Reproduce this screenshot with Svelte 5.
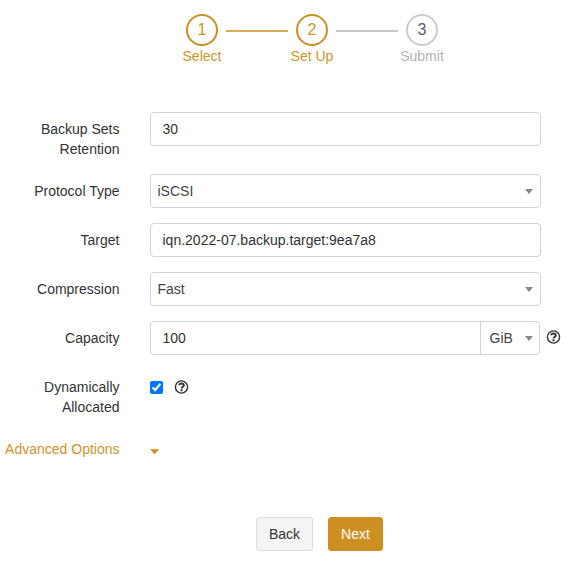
<script>
  const steps = [
    { n: 1, label: 'Select', active: true },
    { n: 2, label: 'Set Up', active: true },
    { n: 3, label: 'Submit', active: false },
  ];
  let retention = $state('30');
  let target = $state('iqn.2022-07.backup.target:9ea7a8');
  let capacity = $state('100');
  let dynamic = $state(true);
</script>

{#snippet help()}
  <svg class="help" width="14" height="14" viewBox="0.5 0 14 14" fill="none" stroke="#333">
    <circle cx="7" cy="7" r="6.1" stroke-width="1.4" />
    <path d="M4.6 5.3C5 4 5.8 3.5 6.9 3.5C8.3 3.5 9.3 4.3 9.3 5.4C9.3 6.8 7.1 6.8 7 8.5" stroke-width="1.9" />
    <path d="M6 10.3H8.1" stroke-width="1.9" />
  </svg>
{/snippet}

<div class="page">
  <div class="steps">
    {#each steps as step, i}
      {#if i > 0}
        <div class="line" class:done={steps[i].active}></div>
      {/if}
      <div class="step" class:active={step.active}>
        <div class="circle">{step.n}</div>
        <div class="caption">{step.label}</div>
      </div>
    {/each}
  </div>

  <div class="form">
    <div class="row">
      <label for="retention">Backup Sets Retention</label>
      <input id="retention" class="control" type="text" bind:value={retention} />
    </div>
    <div class="row">
      <span class="label">Protocol Type</span>
      <div class="control select"><span>iSCSI</span><i class="caret"></i></div>
    </div>
    <div class="row">
      <label for="target">Target</label>
      <input id="target" class="control" type="text" bind:value={target} />
    </div>
    <div class="row">
      <span class="label">Compression</span>
      <div class="control select"><span>Fast</span><i class="caret"></i></div>
    </div>
    <div class="row">
      <label for="capacity">Capacity</label>
      <div class="group">
        <input id="capacity" class="control" type="text" bind:value={capacity} />
        <div class="control select unit"><span>GiB</span><i class="caret"></i></div>
      </div>
      <div class="hint">{@render help()}</div>
    </div>
    <div class="row">
      <label for="dynamic">Dynamically Allocated</label>
      <div class="check">
        <input id="dynamic" type="checkbox" bind:checked={dynamic} />
        {@render help()}
      </div>
    </div>
    <div class="row">
      <span class="label advanced">Advanced Options</span>
      <svg class="expand" width="10" height="6" viewBox="0 0 10 6"><path d="M0 .2H9.2L4.6 5.2Z" fill="#ce8f22" /></svg>
    </div>
  </div>

  <div class="buttons">
    <button class="back">Back</button>
    <button class="next">Next</button>
  </div>
</div>

<style>
  :global(body) {
    background: #fff;
  }
  .page,
  .page * {
    box-sizing: border-box;
  }
  .page {
    width: 587px;
    height: 567px;
    overflow: hidden;
    padding-top: 14px;
    font: 14px/20px 'Liberation Sans', Arial, sans-serif;
    color: #333;
  }
  .steps {
    display: flex;
    height: 98px;
    padding-left: 178px;
  }
  .step {
    width: 48px;
    display: flex;
    flex-direction: column;
    align-items: center;
    color: #b3b3b8;
    white-space: nowrap;
  }
  .circle {
    width: 32px;
    height: 32px;
    border: 2px solid #cbcbce;
    border-radius: 50%;
    font-size: 16px;
    line-height: 28px;
    text-align: center;
    color: #5c5c66;
  }
  .step.active,
  .active .circle {
    color: #d1942b;
    border-color: #ce8f22;
  }
  .line {
    width: 62px;
    height: 2px;
    margin-top: 16px;
    background: #c9c9cb;
  }
  .line.done {
    background: #dcae54;
  }
  .form {
    display: flex;
    flex-direction: column;
    gap: 15px;
  }
  .row {
    display: flex;
    align-items: flex-start;
  }
  label,
  .label {
    flex: none;
    width: 119.5px;
    margin-right: 30px;
    padding: 7px 0 0 4px;
    text-align: right;
  }
  .label.advanced {
    padding-left: 0;
    white-space: nowrap;
    color: #d1942b;
  }
  .control {
    width: 391px;
    height: 34px;
    margin: 0;
    padding: 6px 12px;
    border: 1px solid #d0d2de;
    border-radius: 4px;
    background: #fff;
    font: inherit;
    color: #333;
    outline: none;
  }
  .select {
    display: flex;
    align-items: center;
    justify-content: space-between;
    padding: 0 7px;
    color: #444;
  }
  .caret {
    border: 4px solid transparent;
    border-top: 5px solid #888;
    border-bottom: 0;
  }
  .group {
    display: flex;
    width: 390px;
  }
  .group input {
    width: 331px;
    border-radius: 4px 0 0 4px;
  }
  .group .unit {
    width: 60px;
    margin-left: -1px;
    padding: 0 6px 0 9px;
    border-radius: 0 4px 4px 0;
  }
  .help {
    display: block;
    overflow: visible;
  }
  .hint {
    padding: 9px 0 0 7px;
  }
  .check {
    display: flex;
    gap: 12px;
    padding-top: 10px;
  }
  .check input {
    width: 13px;
    height: 13px;
    margin: 1px 0 0;
  }
  .expand {
    display: block;
    margin-top: 17px;
  }
  .buttons {
    display: flex;
    gap: 15px;
    margin: 57px 0 0 256px;
    padding-top: 1px;
  }
  button {
    height: 34px;
    padding: 0 12px;
    border: 1px solid #ddd;
    border-radius: 3px;
    font: inherit;
  }
  .back {
    width: 57px;
    background: #f4f4f4;
    color: #333;
  }
  .next {
    width: 55px;
    background: #ce8f22;
    border-color: #ce8f22;
    color: #fff;
  }
</style>
